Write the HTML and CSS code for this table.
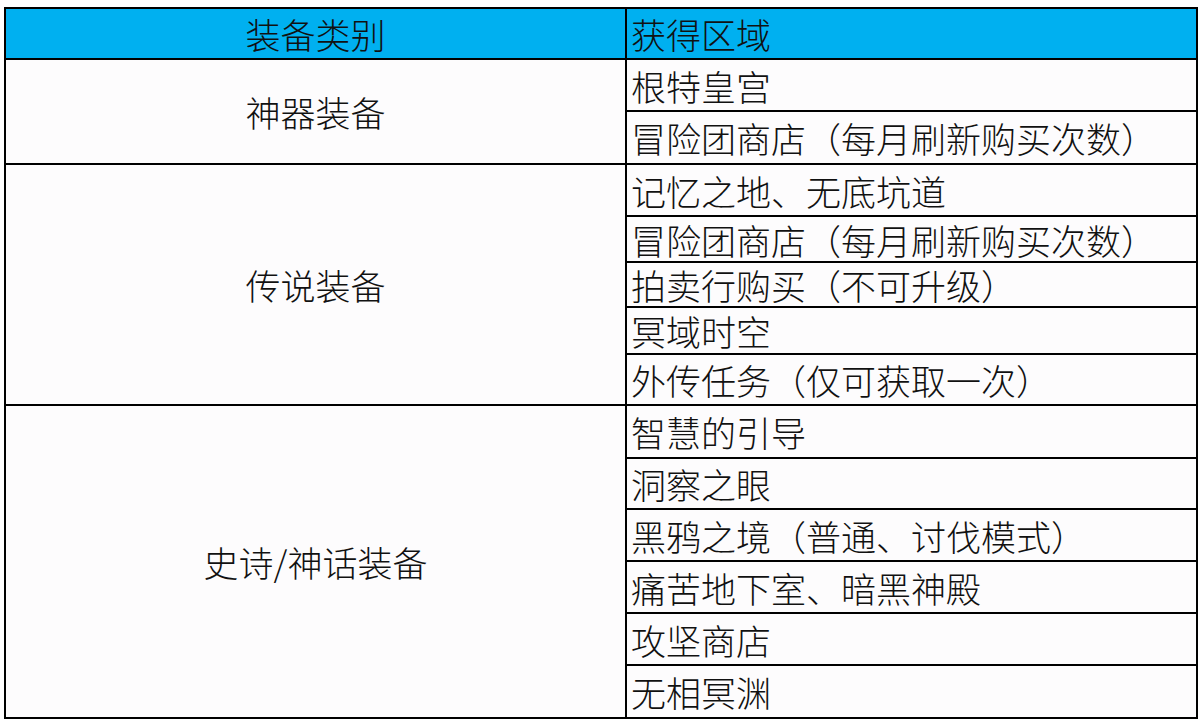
FILE: index.html
```html
<!DOCTYPE html>
<html lang="zh-CN">
<head>
<meta charset="utf-8">
<title>装备获取区域</title>
<link rel="stylesheet" href="styles.css">
</head>
<body>
<table class="gear">
  <colgroup>
    <col class="c-cat">
    <col class="c-src">
  </colgroup>
  <thead>
    <tr class="h51">
      <th class="cat">装备类别</th>
      <th class="src">获得区域</th>
    </tr>
  </thead>
  <tbody>
    <tr class="h52"><td class="cat" rowspan="2">神器装备</td><td class="src">根特皇宫</td></tr>
    <tr class="h53"><td class="src">冒险团商店（每月刷新购买次数）</td></tr>
    <tr class="h52"><td class="cat" rowspan="5">传说装备</td><td class="src">记忆之地、无底坑道</td></tr>
    <tr class="h46"><td class="src">冒险团商店（每月刷新购买次数）</td></tr>
    <tr class="h45"><td class="src">拍卖行购买（不可升级）</td></tr>
    <tr class="h47"><td class="src">冥域时空</td></tr>
    <tr class="h51"><td class="src">外传任务（仅可获取一次）</td></tr>
    <tr class="h53"><td class="cat" rowspan="6">史诗/神话装备</td><td class="src">智慧的引导</td></tr>
    <tr class="h51"><td class="src">洞察之眼</td></tr>
    <tr class="h52"><td class="src">黑鸦之境（普通、讨伐模式）</td></tr>
    <tr class="h52"><td class="src">痛苦地下室、暗黑神殿</td></tr>
    <tr class="h52"><td class="src">攻坚商店</td></tr>
    <tr class="h53"><td class="src">无相冥渊</td></tr>
  </tbody>
</table>
</body>
</html>
```
FILE: styles.css
```css
html, body {
  margin: 0;
  padding: 0;
  background: #ffffff;
}
body {
  padding: 7px 0 0 4px;
  font-family: "Noto Sans CJK SC", "Microsoft YaHei", sans-serif;
  color: #111111;
}
.gear {
  border-collapse: collapse;
  table-layout: fixed;
  width: 1192px;
  font-size: 35px;
  font-weight: 300;
  line-height: 1;
  background: #fdfcfd;
}
.c-cat { width: 621px; }
.c-src { width: 571px; }
.gear th,
.gear td {
  border: 2px solid #000000;
  padding: 0;
  font-weight: 300;
  vertical-align: middle;
}
.gear thead th {
  background: #00b0f0;
}
.cat {
  text-align: center;
}
.src {
  text-align: left;
  padding-left: 4px !important;
  white-space: nowrap;
}
.h45 { height: 45px; }
.h46 { height: 46px; }
.h47 { height: 47px; }
.h51 { height: 51px; }
.h52 { height: 52px; }
.h53 { height: 53px; }
```
